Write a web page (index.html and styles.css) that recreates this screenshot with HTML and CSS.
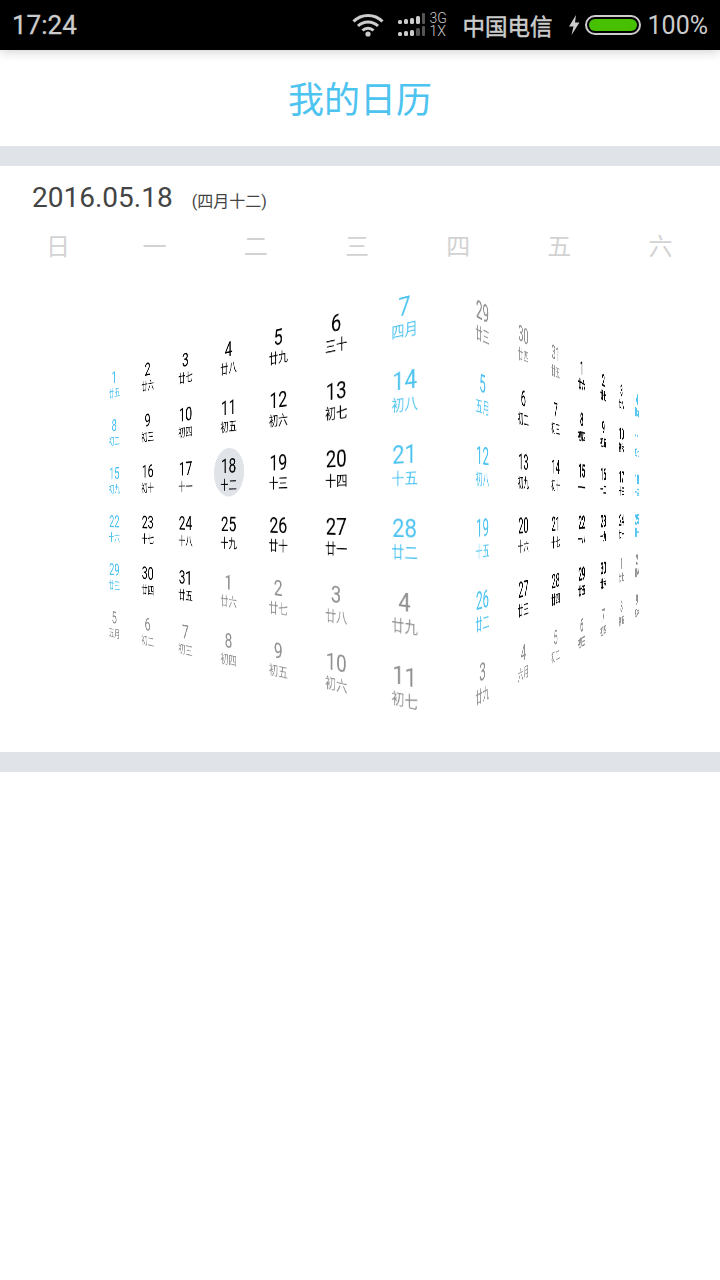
FILE: index.html
```html
<!DOCTYPE html>
<html lang="zh-CN">
<head>
    <meta charset="UTF-8">
    <meta name="viewport" content="width=device-width, initial-scale=1.0">
    <title>我的日历</title>
    <link rel="stylesheet" href="styles.css">
</head>
<body>
    <!-- Status bar -->
    <div class="status-bar">
        <span class="clock">17:24</span>
        <div class="status-right">
            <svg class="wifi" width="32" height="24" viewBox="0 0 32 24" fill="none" stroke="#ccc" stroke-width="3">
                <path d="M1.5 8.5C9.5 .5 22.5 .5 30.5 8.5"/>
                <path d="M6 13C11.5 7.5 20.5 7.5 26 13"/>
                <path d="M10.5 17.5C13.5 14.5 18.5 14.5 21.5 17.5"/>
                <circle cx="16" cy="21" r="2.6" fill="#ccc" stroke="none"/>
            </svg>
            <svg class="signal" width="28" height="24" viewBox="0 0 28 24">
                <rect x="0" y="7" width="4" height="4" rx="1.5" fill="#ccc"/>
                <rect x="6" y="6" width="4" height="5" rx="1.5" fill="#ccc"/>
                <rect x="12" y="5" width="4" height="6" rx="1.5" fill="#ccc"/>
                <rect x="18" y="3" width="4" height="8" rx="1.5" fill="#ccc"/>
                <rect x="24" y="0" width="3" height="11" rx="1" fill="#555"/>
                <rect x="0" y="19" width="4" height="4" rx="1.5" fill="#ccc"/>
                <rect x="6" y="18" width="4" height="5" rx="1.5" fill="#ccc"/>
                <rect x="12" y="17" width="4" height="6" rx="1.5" fill="#ccc"/>
                <rect x="18" y="15" width="4" height="8" rx="1.5" fill="#555"/>
                <rect x="24" y="13" width="3" height="10" rx="1" fill="#555"/>
            </svg>
            <div class="net"><span>3G</span><span>1X</span></div>
            <span class="carrier">中国电信</span>
            <svg class="bolt" width="12" height="20" viewBox="0 0 12 20">
                <path d="M8 0L1 11.5H5.5L3.5 20L11.5 7.5H7L8 0Z" fill="#ccc"/>
            </svg>
            <div class="battery"><div class="battery-level"></div></div>
            <span class="percent">100%</span>
        </div>
    </div>

    <div class="title-bar">我的日历</div>
    <div class="divider"></div>

    <div class="calendar">
        <div class="date-row">
            <span class="date">2016.05.18</span>
            <span class="date-lunar">(四月十二)</span>
        </div>

        <div class="week">
            <span>日</span><span>一</span><span>二</span><span>三</span><span>四</span><span>五</span><span>六</span>
        </div>

        <div class="stage">
            <!-- May 2016 -->
            <div class="face face-left">
                <div class="day blue"><span class="num">1</span><span class="lunar">廿五</span></div>
                <div class="day"><span class="num">2</span><span class="lunar">廿六</span></div>
                <div class="day"><span class="num">3</span><span class="lunar">廿七</span></div>
                <div class="day"><span class="num">4</span><span class="lunar">廿八</span></div>
                <div class="day"><span class="num">5</span><span class="lunar">廿九</span></div>
                <div class="day"><span class="num">6</span><span class="lunar">三十</span></div>
                <div class="day blue"><span class="num">7</span><span class="lunar">四月</span></div>

                <div class="day blue"><span class="num">8</span><span class="lunar">初二</span></div>
                <div class="day"><span class="num">9</span><span class="lunar">初三</span></div>
                <div class="day"><span class="num">10</span><span class="lunar">初四</span></div>
                <div class="day"><span class="num">11</span><span class="lunar">初五</span></div>
                <div class="day"><span class="num">12</span><span class="lunar">初六</span></div>
                <div class="day"><span class="num">13</span><span class="lunar">初七</span></div>
                <div class="day blue"><span class="num">14</span><span class="lunar">初八</span></div>

                <div class="day blue"><span class="num">15</span><span class="lunar">初九</span></div>
                <div class="day"><span class="num">16</span><span class="lunar">初十</span></div>
                <div class="day"><span class="num">17</span><span class="lunar">十一</span></div>
                <div class="day today"><span class="num">18</span><span class="lunar">十二</span></div>
                <div class="day"><span class="num">19</span><span class="lunar">十三</span></div>
                <div class="day"><span class="num">20</span><span class="lunar">十四</span></div>
                <div class="day blue"><span class="num">21</span><span class="lunar">十五</span></div>

                <div class="day blue"><span class="num">22</span><span class="lunar">十六</span></div>
                <div class="day"><span class="num">23</span><span class="lunar">十七</span></div>
                <div class="day"><span class="num">24</span><span class="lunar">十八</span></div>
                <div class="day"><span class="num">25</span><span class="lunar">十九</span></div>
                <div class="day"><span class="num">26</span><span class="lunar">廿十</span></div>
                <div class="day"><span class="num">27</span><span class="lunar">廿一</span></div>
                <div class="day blue"><span class="num">28</span><span class="lunar">廿二</span></div>

                <div class="day blue"><span class="num">29</span><span class="lunar">廿三</span></div>
                <div class="day"><span class="num">30</span><span class="lunar">廿四</span></div>
                <div class="day"><span class="num">31</span><span class="lunar">廿五</span></div>
                <div class="day gray"><span class="num">1</span><span class="lunar">廿六</span></div>
                <div class="day gray"><span class="num">2</span><span class="lunar">廿七</span></div>
                <div class="day gray"><span class="num">3</span><span class="lunar">廿八</span></div>
                <div class="day gray"><span class="num">4</span><span class="lunar">廿九</span></div>

                <div class="day gray"><span class="num">5</span><span class="lunar">五月</span></div>
                <div class="day gray"><span class="num">6</span><span class="lunar">初二</span></div>
                <div class="day gray"><span class="num">7</span><span class="lunar">初三</span></div>
                <div class="day gray"><span class="num">8</span><span class="lunar">初四</span></div>
                <div class="day gray"><span class="num">9</span><span class="lunar">初五</span></div>
                <div class="day gray"><span class="num">10</span><span class="lunar">初六</span></div>
                <div class="day gray"><span class="num">11</span><span class="lunar">初七</span></div>
            </div>

            <!-- June 2016 -->
            <div class="face face-right">
                <div class="day gray"><span class="num">29</span><span class="lunar">廿三</span></div>
                <div class="day gray"><span class="num">30</span><span class="lunar">廿四</span></div>
                <div class="day gray"><span class="num">31</span><span class="lunar">廿五</span></div>
                <div class="day"><span class="num">1</span><span class="lunar">廿六</span></div>
                <div class="day"><span class="num">2</span><span class="lunar">廿七</span></div>
                <div class="day"><span class="num">3</span><span class="lunar">廿八</span></div>
                <div class="day blue"><span class="num">4</span><span class="lunar">廿九</span></div>

                <div class="day blue"><span class="num">5</span><span class="lunar">五月</span></div>
                <div class="day"><span class="num">6</span><span class="lunar">初二</span></div>
                <div class="day"><span class="num">7</span><span class="lunar">初三</span></div>
                <div class="day"><span class="num">8</span><span class="lunar">初四</span></div>
                <div class="day"><span class="num">9</span><span class="lunar">初五</span></div>
                <div class="day"><span class="num">10</span><span class="lunar">初六</span></div>
                <div class="day blue"><span class="num">11</span><span class="lunar">初七</span></div>

                <div class="day blue"><span class="num">12</span><span class="lunar">初八</span></div>
                <div class="day"><span class="num">13</span><span class="lunar">初九</span></div>
                <div class="day"><span class="num">14</span><span class="lunar">初十</span></div>
                <div class="day"><span class="num">15</span><span class="lunar">十一</span></div>
                <div class="day"><span class="num">16</span><span class="lunar">十二</span></div>
                <div class="day"><span class="num">17</span><span class="lunar">十三</span></div>
                <div class="day blue"><span class="num">18</span><span class="lunar">十四</span></div>

                <div class="day blue"><span class="num">19</span><span class="lunar">十五</span></div>
                <div class="day"><span class="num">20</span><span class="lunar">十六</span></div>
                <div class="day"><span class="num">21</span><span class="lunar">十七</span></div>
                <div class="day"><span class="num">22</span><span class="lunar">十八</span></div>
                <div class="day"><span class="num">23</span><span class="lunar">十九</span></div>
                <div class="day"><span class="num">24</span><span class="lunar">廿十</span></div>
                <div class="day blue"><span class="num">25</span><span class="lunar">廿一</span></div>

                <div class="day blue"><span class="num">26</span><span class="lunar">廿二</span></div>
                <div class="day"><span class="num">27</span><span class="lunar">廿三</span></div>
                <div class="day"><span class="num">28</span><span class="lunar">廿四</span></div>
                <div class="day"><span class="num">29</span><span class="lunar">廿五</span></div>
                <div class="day"><span class="num">30</span><span class="lunar">廿六</span></div>
                <div class="day gray"><span class="num">1</span><span class="lunar">廿七</span></div>
                <div class="day gray"><span class="num">2</span><span class="lunar">廿八</span></div>

                <div class="day gray"><span class="num">3</span><span class="lunar">廿九</span></div>
                <div class="day gray"><span class="num">4</span><span class="lunar">六月</span></div>
                <div class="day gray"><span class="num">5</span><span class="lunar">初二</span></div>
                <div class="day gray"><span class="num">6</span><span class="lunar">初三</span></div>
                <div class="day gray"><span class="num">7</span><span class="lunar">初四</span></div>
                <div class="day gray"><span class="num">8</span><span class="lunar">初五</span></div>
                <div class="day gray"><span class="num">9</span><span class="lunar">初六</span></div>
            </div>
        </div>
    </div>
    <div class="divider"></div>
</body>
</html>
```

FILE: styles.css
```css
* {
    margin: 0;
    padding: 0;
    box-sizing: border-box;
}

body {
    font-family: Roboto, "Noto Sans CJK SC", sans-serif;
    background-color: #fff;
    color: #000;
    overflow: hidden;
}

/* Status bar */
.status-bar {
    position: relative;
    z-index: 1;
    height: 50px;
    display: flex;
    justify-content: space-between;
    align-items: center;
    padding: 0 12px;
    background-color: #000;
    color: #ccc;
    box-shadow: 0 2px 10px rgba(0, 0, 0, 0.18);
}

.clock {
    font-size: 26px;
    -webkit-text-stroke: 0.3px #ccc;
}

.status-right {
    display: flex;
    align-items: center;
}

.wifi {
    margin-right: 14px;
}

.signal {
    margin-right: 4px;
}

.net {
    display: flex;
    flex-direction: column;
    width: 21px;
    font-size: 14px;
    font-weight: 300;
    line-height: 13px;
    margin-right: 12px;
}

.carrier {
    font-size: 22.5px;
    margin-right: 15px;
    -webkit-text-stroke: 0.5px #ccc;
}

.bolt {
    margin-right: 5px;
}

.battery {
    width: 56px;
    height: 20px;
    padding: 2px;
    border: 2px solid #ccc;
    border-radius: 10px;
    margin-right: 7px;
}

.battery-level {
    height: 100%;
    background-color: #46c000;
    border-radius: 6px;
}

.percent {
    font-size: 25px;
}

/* Title */
.title-bar {
    height: 96px;
    display: flex;
    justify-content: center;
    align-items: center;
    padding-bottom: 2px;
    font-size: 36px;
    color: #4dc3f0;
}

.divider {
    height: 20px;
    background-color: #e0e3e8;
}

/* Calendar panel */
.calendar {
    height: 586px;
}

.date-row {
    display: flex;
    align-items: baseline;
    padding: 15px 0 0 32px;
    height: 56px;
    color: #444;
}

.date {
    font-size: 28px;
}

.date-lunar {
    font-size: 16px;
    margin-left: 19px;
}

.week {
    display: grid;
    grid-template-columns: 92px repeat(6, 101.2px);
    padding: 0 0 6px 12px;
    height: 50px;
    align-items: center;
    text-align: center;
    font-size: 24px;
    color: #d2d2d2;
}

.stage {
    width: 560px;
    height: 474px;
    margin: 0 auto;
    display: grid;
    grid-template-columns: 560px;
    grid-template-rows: 474px;
    place-items: center;
    overflow: hidden;
    perspective: 604px;
}

.face {
    grid-area: 1 / 1;
    display: grid;
    grid-auto-rows: 84px;
}

.face-left {
    grid-template-columns: repeat(7, 101px);
    transform: translate3d(-190px, 0, -266.5px) rotateY(-37.64deg);
}

.face-right {
    grid-template-columns: repeat(7, 119px);
    transform: translate3d(361.8px, 0, -382.5px) rotateY(52.1deg);
}

/* far columns of the right face go thin under the rotation */
.face-right .day:nth-child(7n+4),
.face-right .day:nth-child(7n+5),
.face-right .day:nth-child(7n+6),
.face-right .day:nth-child(7n) {
    -webkit-text-stroke: 1px currentColor;
}

.day {
    position: relative;
    display: flex;
    flex-direction: column;
    align-items: center;
    padding-top: 7px;
}

.num {
    position: relative;
    font-size: 30px;
    line-height: 30px;
}

.lunar {
    position: relative;
    margin-top: 4px;
    font-size: 18px;
    line-height: 18px;
}

.blue {
    color: #4dc3f0;
}

.gray {
    color: #909090;
}

.today::before {
    content: "";
    position: absolute;
    top: -4px;
    left: 50%;
    width: 66px;
    height: 70px;
    margin-left: -33px;
    border-radius: 50%;
    background-color: #e0e3e8;
}
```
